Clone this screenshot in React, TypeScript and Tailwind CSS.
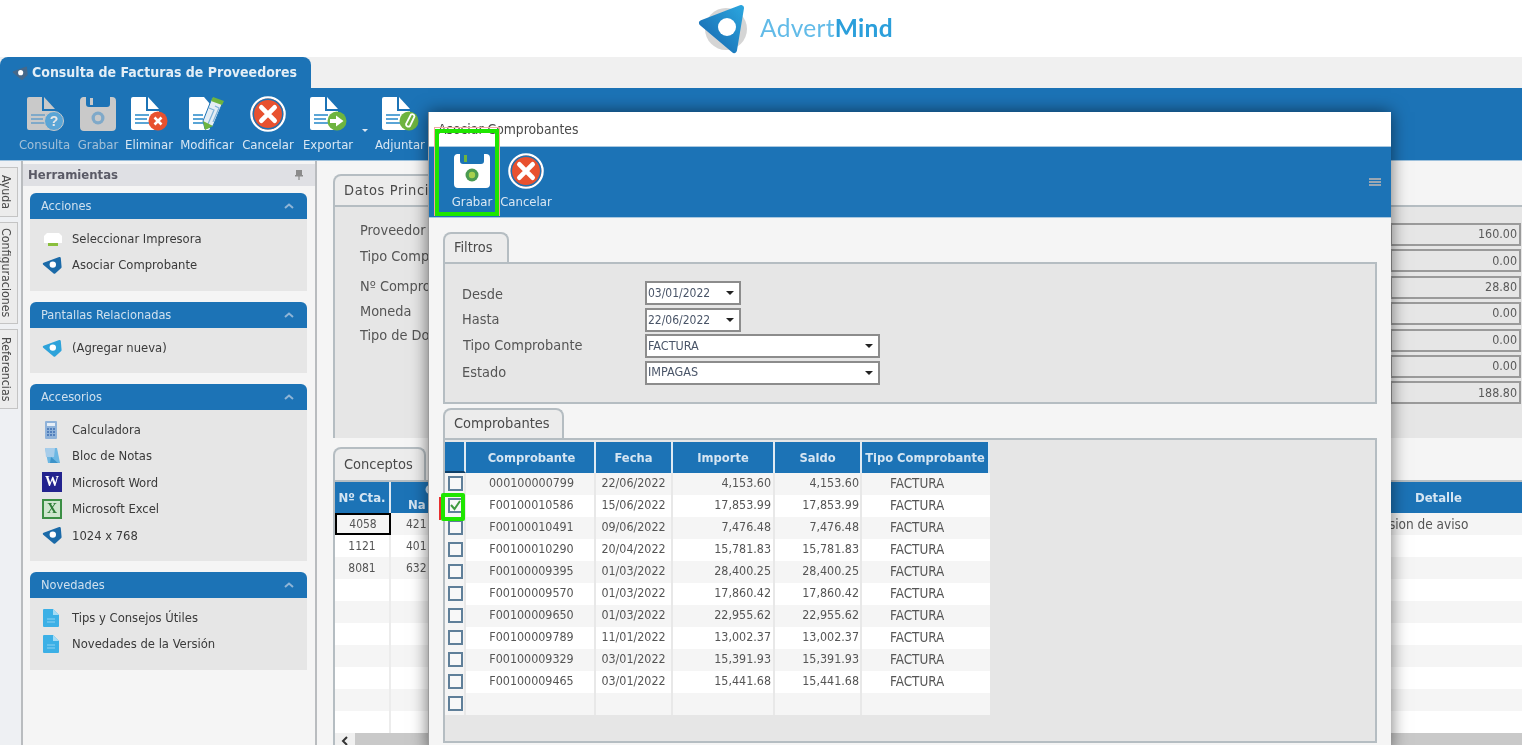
import React from 'react'

const FONT = '[font-family:"DejaVu_Sans_Condensed","DejaVu_Sans",sans-serif]'

const facturas = [
  ['000100000799', '22/06/2022', '4,153.60'],
  ['F00100010586', '15/06/2022', '17,853.99'],
  ['F00100010491', '09/06/2022', '7,476.48'],
  ['F00100010290', '20/04/2022', '15,781.83'],
  ['F00100009395', '01/03/2022', '28,400.25'],
  ['F00100009570', '01/03/2022', '17,860.42'],
  ['F00100009650', '01/03/2022', '22,955.62'],
  ['F00100009789', '11/01/2022', '13,002.37'],
  ['F00100009329', '03/01/2022', '15,391.93'],
  ['F00100009465', '03/01/2022', '15,441.68'],
]

const totales = ['160.00', '0.00', '28.80', '0.00', '0.00', '0.00', '188.80']

const conceptos = [
  ['4058', '421', 'Emision de aviso'],
  ['1121', '401', ''],
  ['8081', '632', ''],
  ['', '', ''],
  ['', '', ''],
  ['', '', ''],
  ['', '', ''],
  ['', '', ''],
  ['', '', ''],
  ['', '', ''],
]

const Mark = ({ size = 20, color = '#1c73b6', hole = 'white' }: { size?: number; color?: string; hole?: string }) => (
  <svg width={size} height={size} viewBox="0 0 50 50">
    <path d="M44 8 L5 22 L31 44 L46 30 Z" fill={color} stroke={color} strokeWidth="6" strokeLinejoin="round" />
    <circle cx="27" cy="24" r="8" fill={hole} />
  </svg>
)

const Logo = () => (
  <svg width="50" height="50" viewBox="0 0 50 50">
    <defs>
      <linearGradient id="logoGrad" x1="0" y1="1" x2="1" y2="0">
        <stop offset="0" stopColor="#1766ae" />
        <stop offset="1" stopColor="#2aa3dc" />
      </linearGradient>
    </defs>
    <circle cx="29" cy="25" r="21" fill="#d5d5d5" />
    <path d="M44 4 L5 19 L37 46 Z" fill="url(#logoGrad)" stroke="url(#logoGrad)" strokeWidth="6" strokeLinejoin="round" />
    <circle cx="30" cy="23" r="9" fill="white" />
  </svg>
)

const Page = ({ fill, line }: { fill: string; line: string }) => (
  <>
    <path d="M3 1 H16 V15 H29 V32 a2 2 0 0 1 -2 2 H3 a2 2 0 0 1 -2 -2 V3 a2 2 0 0 1 2 -2 Z" fill={fill} />
    <path d="M18 1 L29 13 H18 Z" fill={fill} />
    <path d="M5 19 H19 M5 23 H17 M5 27 H19" stroke={line} strokeWidth="1.8" />
  </>
)

const Badge = ({ kind }: { kind: 'help' | 'del' | 'export' | 'clip' }) => {
  if (kind === 'help')
    return (
      <>
        <circle cx="28" cy="25" r="9.5" fill="#5aa5d6" stroke="#c9c9c9" strokeWidth="1" />
        <text x="28" y="30" textAnchor="middle" fontSize="14" fontWeight="700" fill="#e8e8e8" fontFamily="Liberation Sans">?</text>
      </>
    )
  if (kind === 'del')
    return (
      <>
        <circle cx="28" cy="25" r="9.5" fill="#e8512f" />
        <path d="M24.5 21.5 L31.5 28.5 M31.5 21.5 L24.5 28.5" stroke="white" strokeWidth="2.6" />
      </>
    )
  if (kind === 'export')
    return (
      <>
        <circle cx="28" cy="25" r="9.5" fill="#6eb43f" />
        <path d="M21 23 H27 V19.5 L34.5 25 L27 30.5 V27 H21 Z" fill="white" />
      </>
    )
  return (
    <>
      <circle cx="28" cy="25" r="9.5" fill="#6eb43f" />
      <path d="M30 18.5 a2.4 2.4 0 0 1 3.5 2 L29 30 a2.4 2.4 0 0 1 -4 -2 Z" fill="none" stroke="white" strokeWidth="1.8" />
    </>
  )
}

const DocIcon = ({ badge, dim }: { badge: 'help' | 'del' | 'export' | 'clip'; dim?: boolean }) => (
  <svg width="38" height="36" viewBox="0 0 38 36">
    <Page fill={dim ? '#c9c9c9' : 'white'} line={dim ? '#7fa9c9' : '#5aa5d6'} />
    <Badge kind={badge} />
  </svg>
)

const PencilIcon = () => (
  <svg width="38" height="36" viewBox="0 0 38 36">
    <path d="M3 1 H16 L22 8 V32 a2 2 0 0 1 -2 2 H3 a2 2 0 0 1 -2 -2 V3 a2 2 0 0 1 2 -2 Z" fill="white" />
    <path d="M5 19 H15 M5 23 H15 M5 27 H15" stroke="#5aa5d6" strokeWidth="1.8" />
    <path d="M24 2 L35 6 L25 30 L17 33 L15 25 Z" fill="#e4edf4" stroke="#1c73b6" strokeWidth="1" />
    <path d="M21 12 L26 14 L20 28 M27 10 L31 12 L25 26" fill="none" stroke="#7fb2d8" strokeWidth="1.2" />
    <path d="M25 1 L36 5 L34 9 L23 5 Z" fill="#6eb43f" />
    <path d="M15 25 L25 30 L17 34 Z" fill="#6eb43f" />
  </svg>
)

const Floppy = ({ dim }: { dim?: boolean }) => (
  <svg width="38" height="36" viewBox="0 0 38 36">
    <path
      d="M4 1 H7 V8 a3 3 0 0 0 3 3 H28 a3 3 0 0 0 3 -3 V1 H33 a4 4 0 0 1 4 4 V31 a4 4 0 0 1 -4 4 H5 a4 4 0 0 1 -4 -4 V5 a4 4 0 0 1 3 -4 Z"
      fill={dim ? '#c9c9c9' : 'white'}
    />
    <rect x="11" y="2" width="3" height="7" fill={dim ? '#c9c9c9' : '#6eb43f'} />
    <circle cx="19" cy="22" r="6.5" fill={dim ? '#7fa9c9' : '#4a9a50'} />
    <circle cx="19" cy="22" r="3.2" fill={dim ? '#c9c9c9' : '#a8d04e'} />
  </svg>
)

const CancelIcon = () => (
  <svg width="38" height="36" viewBox="0 0 38 38">
    <circle cx="19" cy="19" r="17.5" fill="#e8512f" stroke="white" strokeWidth="2.5" />
    <circle cx="19" cy="19" r="15.5" fill="none" stroke="#1c73b6" strokeWidth="1.5" />
    <path d="M12 12 L26 26 M26 12 L12 26" stroke="white" strokeWidth="5" strokeLinecap="round" />
  </svg>
)

const Printer = () => (
  <svg width="22" height="18" viewBox="0 0 22 18">
    <path d="M5 3 H17 L20 6 V13 H2 V6 Z" fill="white" />
    <rect x="6" y="13" width="10" height="3" fill="#8abf3c" />
  </svg>
)

const Calc = () => (
  <svg width="18" height="20" viewBox="0 0 18 20">
    <rect x="3" y="1" width="12" height="18" rx="1" fill="#8fb2d9" />
    <rect x="5" y="3" width="8" height="3" fill="#e6eef7" />
    <path d="M5 9 H13 M5 12 H13 M5 15 H13" stroke="#3f6fb3" strokeWidth="1.5" strokeDasharray="2 1" />
  </svg>
)

const Notes = () => (
  <svg width="20" height="20" viewBox="0 0 20 20">
    <path d="M3 2 H15 L18 17 H6 Z" fill="#6cb7e3" />
    <path d="M3 2 H13 L12 11 H4 Z" fill="#a7cdea" />
    <path d="M9 11 L16 17 H8 Z" fill="#3c93c9" />
  </svg>
)

const DocBlue = () => (
  <svg width="18" height="20" viewBox="0 0 18 20">
    <path d="M2 1 H11 L17 7 V18 a1 1 0 0 1 -1 1 H2 a1 1 0 0 1 -1 -1 V2 a1 1 0 0 1 1 -1 Z" fill="#3cb0e6" />
    <path d="M11 1 L17 7 H11 Z" fill="#a5dcf5" />
    <path d="M5 11 H13 M5 14 H13" stroke="#8fd2f2" strokeWidth="1" />
  </svg>
)

const OfficeBox = ({ letter, box }: { letter: string; box: string }) => (
  <div className={`flex h-[20px] w-[20px] items-center justify-center border-2 ${box}`}>
    <span className="font-['Liberation_Serif',serif] text-[14px] leading-none font-bold">{letter}</span>
  </div>
)

const Chevron = () => (
  <svg width="10" height="6" viewBox="0 0 10 6">
    <path d="M1 5 L5 1.5 L9 5" fill="none" stroke="#8fb5d6" strokeWidth="2" />
  </svg>
)

const ToolButton = ({ w, label, dim, children }: { w: string; label: string; dim?: boolean; children: React.ReactNode }) => (
  <div className={`flex flex-col items-center ${w}`}>
    <div className="flex h-[36px] items-center justify-center">{children}</div>
    <span className={`mt-[6px] text-[13px] leading-[14px] whitespace-nowrap ${dim ? 'text-[#a3c0d8]' : 'text-[#d9e7f3]'}`}>{label}</span>
  </div>
)

const Group = ({ title, h, items }: { title: string; h: string; items: { icon: React.ReactNode; label: string }[] }) => (
  <section>
    <div className="flex h-[26px] items-center justify-between rounded-t-md bg-[#1c73b6] pr-[13px] pl-[11px] text-[12.7px] text-[#cfe0ee]">
      <span>{title}</span>
      <Chevron />
    </div>
    <div className={`bg-[#e6e6e6] pt-[6.5px] pl-[12px] ${h}`}>
      {items.map((it) => (
        <div key={it.label} className="flex h-[26.4px] items-center text-[12.9px] text-[#3a3a3a]">
          <span className="flex w-[30px] justify-start">
            <span className="w-[20px]">{it.icon}</span>
          </span>
          {it.label}
        </div>
      ))}
    </div>
  </section>
)

const SideTab = ({ h, label }: { h: string; label: string }) => (
  <div className={`flex w-[18px] items-center justify-center border border-l-0 border-[#c4c4c4] bg-[#ececec] pr-[5px] text-[12.3px] text-[#4a4a4a] [writing-mode:vertical-rl] ${h}`}>
    {label}
  </div>
)

const Tab = ({ w, h, label }: { w: string; h: string; label: string }) => (
  <div className={`flex items-center overflow-hidden rounded-t-lg border-2 border-b-0 border-[#b5bdc2] bg-[#ececec] pl-[9px] text-[14.5px] whitespace-nowrap text-[#4a4a4a] ${w} ${h}`}>
    {label}
  </div>
)

const Field = ({ w, size, value }: { w: string; size: string; value: string }) => (
  <div className={`flex h-[24px] items-center justify-between border-2 border-[#8c8c8c] bg-white pr-[5px] pl-[1px] text-[#4a5568] ${size} ${w}`}>
    <span>{value}</span>
    <span className="h-0 w-0 border-x-[4px] border-t-[4px] border-x-transparent border-t-[#222]" />
  </div>
)

const modalHead = 'flex h-[31px] items-center justify-center border-r-2 border-[#dfeaf3] bg-[#1c73b6] text-[12.8px] font-bold text-[#d5e5f2]'

export default function App() {
  return (
    <div className={`relative h-[745px] w-full overflow-hidden bg-[#f5f5f5] ${FONT} blur-[0.6px]`}>
      <header className="flex h-[57px] items-center justify-center gap-[13px] bg-white pl-[68px]">
        <Logo />
        <span className="font-['Lato',sans-serif] text-[24.5px] tracking-[0.3px] text-[#62bbe8]">
          Advert<span className="font-bold text-[#2b9fdb]">Mind</span>
        </span>
      </header>

      <div className="h-[31px] bg-[#f0f0f0]">
        <div className="flex h-[31px] w-[311px] items-center gap-[4px] rounded-t-lg bg-[#1c73b6] pl-[12px] text-[14px] font-semibold text-[#e3eef6]">
          <Mark size={16} color="#45688a" />
          Consulta de Facturas de Proveedores
        </div>
      </div>

      <div className="flex h-[73px] border-b border-[#9cc0dc] bg-[#1c73b6] pt-[8px] pl-[19px]">
        <ToolButton w="w-[51px]" label="Consulta" dim><DocIcon badge="help" dim /></ToolButton>
        <ToolButton w="w-[56px]" label="Grabar" dim><Floppy dim /></ToolButton>
        <ToolButton w="w-[46px]" label="Eliminar"><DocIcon badge="del" /></ToolButton>
        <ToolButton w="w-[70px]" label="Modificar"><PencilIcon /></ToolButton>
        <ToolButton w="w-[52px]" label="Cancelar"><CancelIcon /></ToolButton>
        <ToolButton w="w-[68px]" label="Exportar"><DocIcon badge="export" /></ToolButton>
        <div className="flex w-[6px] items-start pt-[33px]">
          <span className="h-0 w-0 border-x-[3px] border-t-[3px] border-x-transparent border-t-[#dbe8f3]" />
        </div>
        <ToolButton w="w-[64px]" label="Adjuntar"><DocIcon badge="clip" /></ToolButton>
      </div>

      <div className="flex h-[584px]">
        <div className="flex w-[21px] flex-col gap-[5px] bg-[#eef0f3] pt-[6px]">
          <SideTab h="h-[50px]" label="Ayuda" />
          <SideTab h="h-[102px]" label="Configuraciones" />
          <SideTab h="h-[80px]" label="Referencias" />
        </div>

        <aside className="w-[296px] shrink-0 border-x-2 border-[#b9bcbf] bg-[#f5f5f5] pt-[3px]">
          <div className="flex h-[22px] items-center justify-between bg-[#dfe0e4] pr-[11px] pl-[5px] text-[13px] font-bold text-[#5a5a66]">
            Herramientas
            <svg width="10" height="12" viewBox="0 0 10 12">
              <path d="M2 1 H8 V6 H9 V7.5 H5.6 V11 H4.4 V7.5 H1 V6 H2 Z" fill="#8b8b8b" />
            </svg>
          </div>
          <div className="flex flex-col gap-[11px] pt-[7px] pr-[8px] pl-[7px]">
            <Group
              title="Acciones"
              h="h-[72px]"
              items={[
                { icon: <Printer />, label: 'Seleccionar Impresora' },
                { icon: <Mark color="#1b6aa8" />, label: 'Asociar Comprobante' },
              ]}
            />
            <Group
              title="Pantallas Relacionadas"
              h="h-[45px]"
              items={[{ icon: <Mark color="#2ea3da" />, label: '(Agregar nueva)' }]}
            />
            <Group
              title="Accesorios"
              h="h-[151px]"
              items={[
                { icon: <Calc />, label: 'Calculadora' },
                { icon: <Notes />, label: 'Bloc de Notas' },
                { icon: <OfficeBox letter="W" box="border-[#23238e] bg-[#23238e] text-white" />, label: 'Microsoft Word' },
                { icon: <OfficeBox letter="X" box="border-[#3c8f45] bg-[#cfe6cf] text-[#2f7d38]" />, label: 'Microsoft Excel' },
                { icon: <Mark color="#1b6aa8" />, label: '1024 x 768' },
              ]}
            />
            <Group
              title="Novedades"
              h="h-[72px]"
              items={[
                { icon: <DocBlue />, label: 'Tips y Consejos Útiles' },
                { icon: <DocBlue />, label: 'Novedades de la Versión' },
              ]}
            />
          </div>
        </aside>

        <main className="min-w-0 flex-1 pt-[13px] pl-[16px]">
          <Tab w="w-[150px] tracking-[0.6px]" h="h-[31px]" label="Datos Princi" />
          <div className="flex h-[233px] justify-between border-t-2 border-l-2 border-[#b5bdc2] bg-[#e6e6e6]">
            <div className="ml-[25px] flex flex-col pt-[14px] text-[14.4px] leading-[18px] whitespace-nowrap text-[#555]">
              <span>Proveedor</span>
              <span className="mt-[8px]">Tipo Comp</span>
              <span className="mt-[12px]">Nº Compro</span>
              <span className="mt-[7px]">Moneda</span>
              <span className="mt-[6px]">Tipo de Do</span>
            </div>
            <div className="flex w-[132px] flex-col gap-[3.4px] pt-[16px] pr-[1px]">
              {totales.map((t, i) => (
                <div key={i} className="flex h-[23px] items-center justify-end border-2 border-[#9a9a9a] bg-[#e6e6e6] pr-[2px] text-[12.4px] text-[#5a5a5a]">
                  {t}
                </div>
              ))}
            </div>
          </div>

          <div className="mt-[9px]">
            <Tab w="w-[93px]" h="h-[33px]" label="Conceptos" />
            <div className="border-t-2 border-l-2 border-[#b5bdc2] bg-white">
              <div className="grid h-[31px] grid-cols-[56px_1fr_167px] bg-[#1c73b6] text-[13px] font-bold text-[#d5e5f2]">
                <div className="flex items-center justify-center border-r-2 border-[#dfeaf3]">Nº Cta.</div>
                <div className="w-[37px] text-[13px] leading-[15px] whitespace-nowrap">
                  <span className="block pl-[34px]">C</span>
                  <span className="block pl-[17px]">Na</span>
                </div>
                <div className="flex items-center justify-center">Detalle</div>
              </div>
              {conceptos.map((row, i) => (
                <div key={i} className={`grid h-[22px] grid-cols-[56px_72px_1fr_167px] text-[12px] text-[#555] ${i % 2 === 0 ? 'bg-[#f5f5f5]' : 'bg-white'}`}>
                  <div className={`flex items-center justify-center ${i === 0 ? 'border-2 border-black bg-[#f5f5f5]' : 'border-r-2 border-[#ececec]'}`}>{row[0]}</div>
                  <div className="flex items-center pl-[15px]">{row[1]}</div>
                  <div />
                  <div className="flex items-center pl-[11px] text-[13.5px]">{row[2]}</div>
                </div>
              ))}
              <div className="flex h-[15px] items-center bg-[#f0f0f0] pl-[5px] text-[#333]">
                <svg width="12" height="10" viewBox="0 0 12 10">
                  <path d="M7 1 L3 5 L7 9" fill="none" stroke="#333" strokeWidth="2" />
                </svg>
                <div className="ml-[3px] h-[15px] flex-1 bg-[#c9c9c9]" />
              </div>
            </div>
          </div>
        </main>
      </div>

      {/* dialogo Asociar Comprobantes */}
      <div className="absolute top-[112px] left-[428px] h-[640px] w-[963px] border-l border-[#9a9a9a] bg-[#f5f5f5] shadow-[0_0_16px_rgba(0,0,0,0.55)]">
        <div className="flex h-[34px] items-center bg-white pl-[9px] text-[13.8px] text-[#4a4a4a]">Asociar Comprobantes</div>
        <div className="relative flex h-[72px] border-y border-[#a9c8e0] bg-[#1c73b6] pt-[6px] pl-[16px]">
          <ToolButton w="w-[54px]" label="Grabar"><Floppy /></ToolButton>
          <ToolButton w="w-[54px]" label="Cancelar"><CancelIcon /></ToolButton>
          <div className="absolute top-[31px] right-[10px] flex w-[12px] flex-col gap-[1px]">
            <span className="h-[2px] bg-[#9aa7b3]" />
            <span className="h-[2px] bg-[#9aa7b3]" />
            <span className="h-[2px] bg-[#9aa7b3]" />
          </div>
        </div>

        <div className="px-[14px] pt-[14px]">
          <Tab w="w-[66px]" h="h-[30px]" label="Filtros" />
          <div className="h-[142px] border-2 border-[#b5bdc2] bg-[#e6e6e6] pt-[17px] pl-[17px]">
            <div className="grid grid-cols-[183px_1fr] items-center gap-y-[2.6px] text-[14.4px] text-[#555]">
              <span className="flex h-[24px] items-center pt-[4px]">Desde</span>
              <Field w="w-[96px]" size="text-[12px]" value="03/01/2022" />
              <span className="flex h-[24px] items-center pt-[1px]">Hasta</span>
              <Field w="w-[96px]" size="text-[12px]" value="22/06/2022" />
              <span className="flex h-[24px] items-center pl-[1px]">Tipo Comprobante</span>
              <Field w="w-[235px]" size="text-[12.5px]" value="FACTURA" />
              <span className="flex h-[24px] items-center">Estado</span>
              <Field w="w-[235px]" size="text-[12.5px]" value="IMPAGAS" />
            </div>
          </div>

          <div className="mt-[4px]">
            <Tab w="w-[121px]" h="h-[30px]" label="Comprobantes" />
            <div className="h-[305px] border-2 border-[#b5bdc2] bg-[#e6e6e6] pt-[2px]">
              <div className="grid w-[545px] grid-cols-[21px_130px_77px_102px_87px_128px]">
                <div className={`${modalHead} border-b-2 border-b-[#0f3f66]`} />
                <div className={`${modalHead} pl-[3px]`}>Comprobante</div>
                <div className={modalHead}>Fecha</div>
                <div className={modalHead}>Importe</div>
                <div className={modalHead}>Saldo</div>
                <div className={`${modalHead} border-r-0`}>Tipo Comprobante</div>
              </div>
              {[...facturas, ['', '', '']].map((f, i) => (
                <div
                  key={i}
                  className={`grid h-[22px] w-[545px] grid-cols-[21px_130px_77px_102px_87px_128px] text-[12.4px] text-[#555] [&>div]:pb-[2px] ${i % 2 === 0 ? 'bg-[#f5f5f5]' : 'bg-white'}`}
                >
                  <div className="flex items-center border-r-2 border-[#e8e8e8] bg-[#f5f5f5] pl-[3px]">
                    <span className="relative h-[15px] w-[15px] border-2 border-[#5f7f99] bg-[#f8f8f8]">
                      {i === 1 && (
                        <svg className="absolute -top-[1px] -left-[1px]" width="13" height="13" viewBox="0 0 13 13">
                          <path d="M2 6 L5.5 10 L11 2" fill="none" stroke="#3f9a3f" strokeWidth="2" />
                        </svg>
                      )}
                    </span>
                  </div>
                  <div className="flex items-center justify-center border-r-2 border-[#e8e8e8] pl-[3px]">{f[0]}</div>
                  <div className="flex items-center justify-center border-r-2 border-[#e8e8e8]">{f[1]}</div>
                  <div className="flex items-center justify-end border-r-2 border-[#e8e8e8] pr-[2px]">{f[2]}</div>
                  <div className="flex items-center justify-end border-r-2 border-[#e8e8e8] pr-[1px]">{f[2]}</div>
                  <div className="flex items-center pt-[1px] pl-[28px] text-[13.4px]">{f[0] && 'FACTURA'}</div>
                </div>
              ))}
            </div>
          </div>
        </div>
      </div>

      {/* marcas verdes del manual, con el rastro rojo debajo */}
      <div className="absolute top-[127px] left-[434px] h-[89px] w-[66px] border border-[#f0a8a0]" />
      <div className="absolute top-[497px] left-[439px] h-[23px] w-[2px] bg-[#e83030]" />
      <div className="absolute top-[129px] left-[435px] h-[87px] w-[64px] border-[4px] border-[#1ee600]" />
      <div className="absolute top-[493px] left-[441px] h-[28px] w-[24px] rounded-[2px] border-[4px] border-[#1ee600]" />
    </div>
  )
}
